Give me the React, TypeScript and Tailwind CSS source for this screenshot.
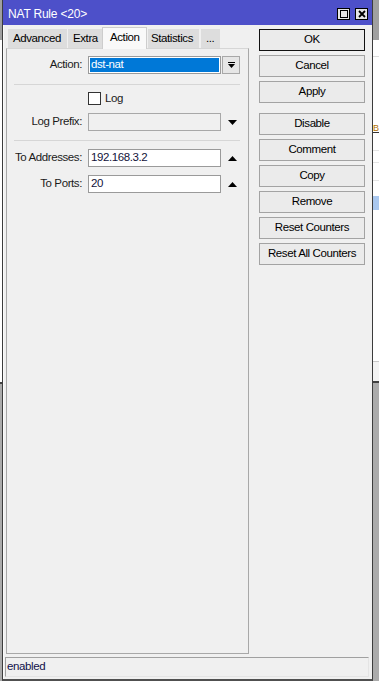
import clsx from "clsx";

const buttons = [
  ["OK", "Cancel", "Apply"],
  ["Disable", "Comment", "Copy", "Remove", "Reset Counters", "Reset All Counters"],
];

function Btn({ label, primary }: { label: string; primary?: boolean }) {
  return (
    <div
      className={clsx(
        "flex h-[22px] w-[106px] items-center justify-center bg-[#ebebeb] text-black",
        primary ? "border border-[#111]" : "border border-[#a3a3a3]"
      )}
    >
      {label}
    </div>
  );
}

function Field({ label, children }: { label: string; children: React.ReactNode }) {
  return (
    <div className="flex h-[18px] items-center">
      <div className="w-[75px] text-right text-[#1b1b1b]">{label}</div>
      {children}
    </div>
  );
}

function UpArrow() {
  return (
    <svg className="ml-[7px]" width="9" height="5" viewBox="0 0 9 5">
      <polygon points="4.5,0 9,5 0,5" fill="#000" />
    </svg>
  );
}

export default function App() {
  return (
    <div className="flex h-[681px] w-[379px] overflow-hidden font-['Liberation_Sans',Arial,sans-serif] text-[11.5px] tracking-[-0.4px]">
      {/* what lies behind the window, left */}
      <div className="flex w-[2px] flex-col">
        <div className="h-[40px] bg-[#a0a0a0]" />
        <div className="h-[342px] bg-white" />
        <div className="h-[2px] bg-[#404040]" />
        <div className="flex-1 bg-[#ababab]" />
      </div>

      {/* window */}
      <div className="flex w-[371px] flex-col border-x border-b-2 border-[#3c3c3c] border-b-[#505050]">
        <div className="flex h-[25px] items-center bg-[#4d50c9] pl-[5px] pr-[4px] pt-[3px] text-[12px] tracking-[-0.2px] text-white">
          <span>NAT Rule &lt;20&gt;</span>
          <div className="ml-auto flex gap-[5px]">
            <div className="flex h-[12px] w-[13px] items-center justify-center border border-black bg-[#e6e6e6]">
              <div className="h-[8px] w-[8px] border-[1.5px] border-black" />
            </div>
            <div className="flex h-[12px] w-[13px] items-center justify-center border border-black bg-[#e6e6e6]">
              <svg width="8" height="8" viewBox="0 0 8 8">
                <path d="M1 1 L7 7 M7 1 L1 7" stroke="#000" strokeWidth="1.8" />
              </svg>
            </div>
          </div>
        </div>

        <div className="flex flex-1 flex-col border-l border-l-[#fafafa] bg-[#f0f0f0]">
          <div className="flex flex-1 pl-[2px]">
            {/* tabs + panel */}
            <div className="flex w-[243px] flex-col pt-[1px]">
              <div className="flex h-[22px] items-end">
                <div className="ml-[2px] flex h-[19px] w-[59px] items-center bg-[#dddddd] pl-[5px]">Advanced</div>
                <div className="ml-[1px] flex h-[19px] w-[34px] items-center bg-[#dddddd] pl-[5px]">Extra</div>
                <div className="relative top-[1px] flex h-[22px] w-[45px] items-center border-x border-t border-[#cdcdcd] bg-[#f9f9f9] pb-[2px] pl-[7px]">
                  Action
                </div>
                <div className="ml-[1px] flex h-[19px] w-[51px] items-center bg-[#dddddd] pl-[3px]">Statistics</div>
                <div className="ml-[2px] flex h-[19px] w-[19px] items-center bg-[#dddddd] pl-[5px]">...</div>
              </div>
              <div className="flex flex-1 flex-col border border-[#a8a8a8] border-t-[#d6d6d6]">
                <div className="mt-[7px]">
                  <Field label="Action:">
                    <div className="ml-[6px] h-full w-[133px] border border-[#9a9a9a] bg-white p-[1px]">
                      <div className="flex h-full items-center bg-[#0078d7] pl-[1px] text-white">dst-nat</div>
                    </div>
                    <div className="ml-[1px] flex h-full w-[18px] flex-col items-center justify-center gap-[1px] border border-[#a8a8a8] bg-[#e6e6e6]">
                      <div className="h-[1px] w-[7px] bg-black" />
                      <svg width="7" height="4" viewBox="0 0 7 4">
                        <polygon points="0,0 7,0 3.5,4" fill="#000" />
                      </svg>
                    </div>
                  </Field>
                </div>
                <div className="ml-[7px] mt-[10px] h-[1px] w-[226px] bg-[#d6d6d6]" />
                <div className="ml-[81px] mt-[7px] flex h-[13px] items-center">
                  <div className="h-[13px] w-[13px] border border-[#333] bg-white" />
                  <span className="ml-[4px] text-[#1b1b1b]">Log</span>
                </div>
                <div className="mt-[8px]">
                  <Field label="Log Prefix:">
                    <div className="ml-[6px] h-full w-[133px] border border-[#a8a8a8] bg-[#f0f0f0]" />
                    <svg className="ml-[7px]" width="9" height="5" viewBox="0 0 9 5">
                      <polygon points="0,0 9,0 4.5,5" fill="#000" />
                    </svg>
                  </Field>
                </div>
                <div className="ml-[7px] mt-[9px] h-[1px] w-[226px] bg-[#d6d6d6]" />
                <div className="mt-[8px]">
                  <Field label="To Addresses:">
                    <div className="ml-[6px] flex h-full w-[133px] items-center border border-[#9a9a9a] bg-white pl-[2px] text-[#12123a]">
                      192.168.3.2
                    </div>
                    <UpArrow />
                  </Field>
                </div>
                <div className="mt-[8px]">
                  <Field label="To Ports:">
                    <div className="ml-[6px] flex h-full w-[133px] items-center border border-[#9a9a9a] bg-white pl-[2px] text-[#12123a]">
                      20
                    </div>
                    <UpArrow />
                  </Field>
                </div>
              </div>
            </div>

            {/* buttons */}
            <div className="ml-[10px] flex flex-col gap-[10px] pt-[4px]">
              {buttons.map((group, i) => (
                <div key={i} className="flex flex-col gap-[4px]">
                  {group.map((b) => (
                    <Btn key={b} label={b} primary={b === "OK"} />
                  ))}
                </div>
              ))}
            </div>
          </div>

          <div className="mb-[2px] ml-[1px] mr-[3px] mt-[3px] flex h-[20px] items-center border border-[#a0a0a0] border-b-[#e4e4e4] border-r-[#e4e4e4] pl-[1px] text-[#10104a]">
            enabled
          </div>
        </div>
      </div>

      {/* what lies behind the window, right */}
      <div className="flex w-[6px] flex-col">
        <div className="h-[40px] bg-[#a0a0a0]" />
        <div className="h-[17px] border-b border-[#dcdcdc] bg-white" />
        <div className="h-[66px] bg-white" />
        <div className="h-[10px] border-b border-[#333] bg-white text-[9px] leading-[10px] text-[#b07000]">B</div>
        <div className="h-[18px] border-b border-[#e4e4e4] bg-white" />
        <div className="h-[12px] border-b border-[#e4e4e4] bg-white" />
        <div className="h-[18px] border-b border-[#e4e4e4] bg-white" />
        <div className="h-[15px] bg-white" />
        <div className="h-[14px] bg-[#aac8ef]" />
        <div className="h-[152px] border-b border-[#c8c8c8] bg-white" />
        <div className="h-[19px] bg-[#f3f3f3]" />
        <div className="h-[2px] bg-[#404040]" />
        <div className="flex-1 bg-[#ababab]" />
      </div>
    </div>
  );
}
